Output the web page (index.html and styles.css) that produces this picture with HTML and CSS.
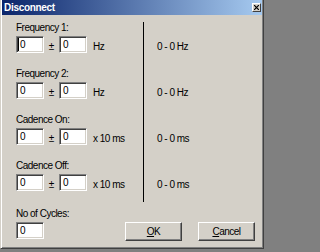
FILE: index.html
```html
<!DOCTYPE html>
<html>
<head>
<meta charset="utf-8">
<title>Disconnect</title>
<link rel="stylesheet" href="styles.css">
</head>
<body>
<div class="window">
  <div class="titlebar">
    <span class="title">Disconnect</span>
    <span class="close">
      <svg width="5" height="5" viewBox="0 0 5 5"><path d="M0 0L5 5M5 0L0 5" stroke="#000" stroke-width="1.2"/></svg>
    </span>
  </div>
  <div class="content">
    <div class="main">
      <div class="groups">
        <div class="group">
          <div class="label">Frequency 1:</div>
          <div class="row">
            <div class="field field--focus"><span class="caret"></span>0</div>
            <span class="pm">±</span>
            <div class="field">0</div>
            <span class="unit">Hz</span>
          </div>
        </div>
        <div class="group">
          <div class="label">Frequency 2:</div>
          <div class="row">
            <div class="field">0</div>
            <span class="pm">±</span>
            <div class="field">0</div>
            <span class="unit">Hz</span>
          </div>
        </div>
        <div class="group">
          <div class="label">Cadence On:</div>
          <div class="row">
            <div class="field">0</div>
            <span class="pm">±</span>
            <div class="field">0</div>
            <span class="unit">x 10 ms</span>
          </div>
        </div>
        <div class="group">
          <div class="label">Cadence Off:</div>
          <div class="row">
            <div class="field">0</div>
            <span class="pm">±</span>
            <div class="field">0</div>
            <span class="unit">x 10 ms</span>
          </div>
        </div>
      </div>
      <div class="sep"></div>
      <div class="values">
        <div class="value">0 - 0 Hz</div>
        <div class="value">0 - 0 Hz</div>
        <div class="value">0 - 0 ms</div>
        <div class="value">0 - 0 ms</div>
      </div>
    </div>
    <div class="bottom">
      <div class="cycles">
        <div class="label">No of Cycles:</div>
        <div class="row">
          <div class="field">0</div>
        </div>
      </div>
      <div class="buttons">
        <button class="btn"><u>O</u>K</button>
        <button class="btn"><u>C</u>ancel</button>
      </div>
    </div>
  </div>
</div>
</body>
</html>
```

FILE: styles.css
```css
html, body {
  margin: 0;
  padding: 0;
}
body {
  background: #808080;
  width: 265px;
  height: 252px;
  overflow: hidden;
  font-family: "Liberation Sans", Arial, sans-serif;
  font-size: 10px;
  letter-spacing: -0.5px;
  color: #000;
}
.window {
  box-sizing: border-box;
  width: 264px;
  height: 249px;
  background: #d4d0c8;
  border-left: 1px solid #d4d0c8;
  border-right: 1px solid #404040;
  border-bottom: 1px solid #404040;
  box-shadow: inset 1px 0 #ffffff, inset -1px -1px #808080;
  display: flex;
  flex-direction: column;
}
.titlebar {
  height: 15px;
  flex: none;
  margin: 0 1px;
  background: linear-gradient(to right, #0a246a, #a6caf0);
  display: flex;
  align-items: center;
  justify-content: space-between;
  padding: 0 1px 0 2px;
}
.title {
  color: #fff;
  font-weight: bold;
  font-size: 10px;
  letter-spacing: -0.3px;
  line-height: 15px;
}
.close {
  box-sizing: border-box;
  width: 9px;
  height: 9px;
  background: #d4d0c8;
  border-top: 1px solid #fff;
  border-left: 1px solid #fff;
  border-right: 1px solid #404040;
  border-bottom: 1px solid #404040;
  display: flex;
  align-items: center;
  justify-content: center;
}
.close svg {
  display: block;
}
.content {
  padding: 7px 8px 0 15px;
}
.main {
  display: flex;
  height: 180px;
}
.groups {
  width: 127px;
  display: flex;
  flex-direction: column;
}
.group {
  height: 46px;
  flex: none;
}
.group:last-child {
  height: 42px;
}
.label {
  line-height: 12px;
  height: 12px;
  margin-bottom: 2px;
  white-space: nowrap;
}
.row {
  display: flex;
  align-items: flex-end;
}
.field {
  box-sizing: border-box;
  width: 28px;
  height: 17px;
  background: #fff;
  border: 1px solid;
  border-color: #808080 #fff #fff #808080;
  box-shadow: inset 1px 1px #404040, inset -1px -1px #d4d0c8;
  padding: 2px 0 0 3px;
  line-height: 12px;
  display: flex;
  align-items: flex-start;
}
.field--focus {
  padding-left: 1px;
}
.caret {
  width: 1px;
  height: 13px;
  margin-top: -1px;
  background: #000;
  margin-right: 1px;
}
.pm {
  width: 15px;
  text-align: center;
  line-height: 12px;
  letter-spacing: 0;
}
.unit {
  margin-left: 6px;
  line-height: 12px;
  white-space: nowrap;
}
.sep {
  width: 1px;
  background: #000;
}
.values {
  padding: 19px 0 0 13px;
}
.value {
  height: 46px;
  line-height: 12px;
  white-space: nowrap;
}
.value:last-child {
  height: 12px;
}
.bottom {
  display: flex;
  margin-top: 6px;
}
.buttons {
  margin-left: auto;
  margin-top: 14px;
  display: flex;
  gap: 16px;
}
.btn {
  box-sizing: border-box;
  width: 57px;
  height: 19px;
  padding: 0;
  margin: 0;
  background: #d4d0c8;
  border: 1px solid;
  border-color: #fff #404040 #404040 #fff;
  box-shadow: inset -1px -1px #808080;
  font-family: "Liberation Sans", Arial, sans-serif;
  font-size: 10px;
  letter-spacing: -0.5px;
  color: #000;
  line-height: 15px;
}
.btn u {
  text-decoration: underline;
}
```
